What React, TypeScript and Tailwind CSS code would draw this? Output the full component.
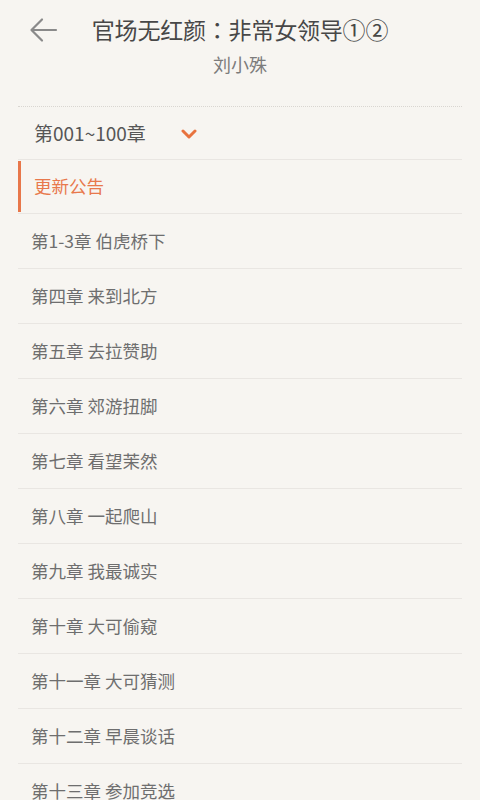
import React from 'react';

const chapters = [
  '第1-3章 伯虎桥下',
  '第四章 来到北方',
  '第五章 去拉赞助',
  '第六章 郊游扭脚',
  '第七章 看望茉然',
  '第八章 一起爬山',
  '第九章 我最诚实',
  '第十章 大可偷窥',
  '第十一章 大可猜测',
  '第十二章 早晨谈话',
  '第十三章 参加竞选',
];

const font = { fontFamily: '"Noto Sans CJK SC", "Noto Sans", sans-serif' };
const titleFont = { fontFamily: '"Noto Sans CJK JP", "Noto Sans CJK SC", sans-serif' };

const App: React.FC = () => {
  return (
    <div className="w-[480px] h-[800px] overflow-hidden bg-[#f7f5f1]" style={font}>
      {/* Header */}
      <div className="relative h-[106px] flex flex-col items-center">
        <button className="absolute left-[29px] top-[17px] p-0">
          <svg width="30" height="26" viewBox="0 0 30 26" fill="none" stroke="#8a8a8a" strokeWidth="2.2" strokeLinecap="round" strokeLinejoin="round">
            <path d="M27 13H3" />
            <path d="M13 2.5L2.5 13L13 23.5" />
          </svg>
        </button>
        <h1 className="mt-[13px] h-[32px] leading-[32px] text-[23px] text-[#474747] font-normal tracking-[-0.2px]" style={titleFont}>
          官场无红颜：非常女领导①②
        </h1>
        <p className="mt-[7px] leading-[24px] text-[18px] text-[#7c7c7c]">刘小殊</p>
      </div>

      <div className="mx-[18px] border-t border-dotted border-[#d9d6d1]">
        {/* Range selector */}
        <div className="h-[53px] flex items-center pl-[16px] border-b border-[#e9e6e2]">
          <span className="text-[19px] text-[#565656]">第001~100章</span>
          <svg className="ml-[35px] mt-[1px]" width="16" height="10" viewBox="0 0 16 10" fill="none" stroke="#e8733f" strokeWidth="3" strokeLinecap="round" strokeLinejoin="round">
            <path d="M2 2L8 8L14 2" />
          </svg>
        </div>

        {/* Notice */}
        <div className="h-[54px] flex items-center border-b border-[#e9e6e2]">
          <div className="self-stretch my-[1px] w-[3px] bg-[#e8774a]" />
          <span className="ml-[13px] text-[17.5px] text-[#e8784c]">更新公告</span>
        </div>

        {chapters.map((c) => (
          <div key={c} className="h-[55px] flex items-center pl-[13px] border-b border-[#e9e6e2]">
            <span className="text-[17.5px] text-[#6e6e6e]">{c}</span>
          </div>
        ))}
      </div>
    </div>
  );
};

export default App;
